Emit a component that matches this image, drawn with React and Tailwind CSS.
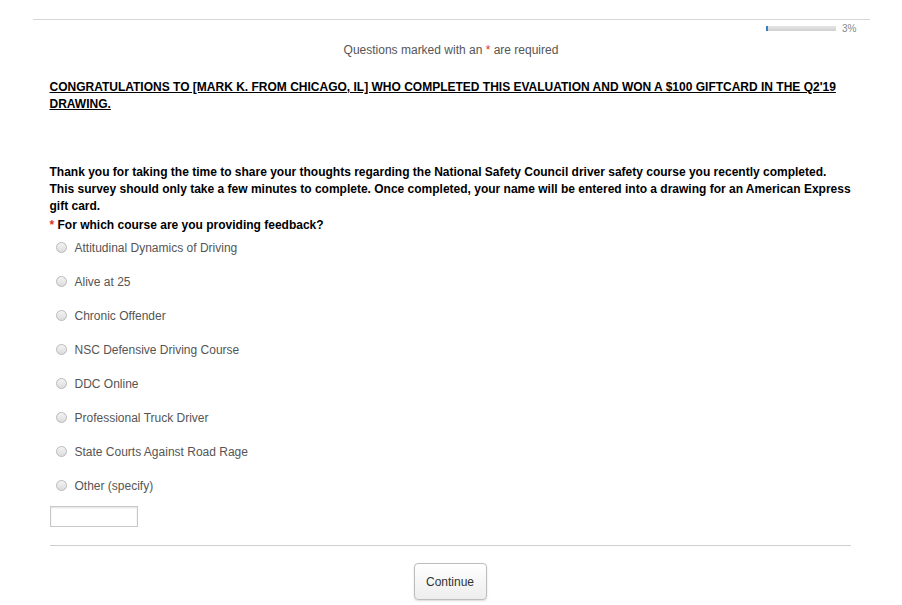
import { useState } from "react";

const courses = [
  "Attitudinal Dynamics of Driving",
  "Alive at 25",
  "Chronic Offender",
  "NSC Defensive Driving Course",
  "DDC Online",
  "Professional Truck Driver",
  "State Courts Against Road Rage",
  "Other (specify)",
];

const App = () => {
  const [picked, setPicked] = useState(null);

  return (
    <div className="min-h-screen bg-white font-['Liberation_Sans',Arial,sans-serif] text-[12px]">
      <div className="w-[837px] mx-auto pt-[19px]">
        {/* Top rule + progress */}
        <div className="border-t border-[#d6d6d6]" />
        <div className="flex justify-end items-center h-[16px] pr-[13px]">
          <div className="w-[70px] h-[5px] bg-gradient-to-b from-[#e6e6e6] to-[#cfcfcf] border-l-2 border-[#3a7fc1]" />
          <span className="ml-[6px] mt-[1px] text-[10px] text-[#888]">3%</span>
        </div>

        <p className="mt-[6px] text-center leading-[17px] text-[#555]">
          Questions marked with an <span className="text-[#e0321e]">*</span> are required
        </p>

        <div className="pl-[17px] pr-[17px]">
          <p className="mt-[20px] leading-[17px] font-bold underline text-black">
            CONGRATULATIONS TO [MARK K. FROM CHICAGO, IL] WHO COMPLETED THIS EVALUATION AND WON A $100 GIFTCARD IN THE Q2'19 DRAWING.
          </p>

          <p className="mt-[51px] leading-[17px] font-bold text-black">
            Thank you for taking the time to share your thoughts regarding the National Safety Council driver safety course you recently completed. This survey should only take a few minutes to complete. Once completed, your name will be entered into a drawing for an American Express gift card.
          </p>

          <p className="mt-[2px] leading-[17px] font-bold text-black">
            <span className="text-[#e0321e]">* </span>For which course are you providing feedback?
          </p>

          {/* Options */}
          <div className="mt-[5px] flex flex-col gap-[17px]">
            {courses.map((c, i) => (
              <label
                key={c}
                className="flex items-center h-[17px] cursor-pointer"
                onClick={() => setPicked(i)}
              >
                <span className="ml-[6px] w-[11px] h-[11px] rounded-full border border-[#b9b9b9] bg-gradient-to-b from-[#f4f4f4] to-[#dcdcdc] flex items-center justify-center">
                  {picked === i && <span className="w-[5px] h-[5px] rounded-full bg-[#555]" />}
                </span>
                <span className="ml-[8px] text-[#555]">{c}</span>
              </label>
            ))}
          </div>

          <input
            type="text"
            className="mt-[12px] block w-[88px] h-[21px] border border-[#c8c8c8] shadow-[inset_0_1px_2px_rgba(0,0,0,0.12)] outline-none px-1"
          />

          <div className="mt-[18px] mr-[2px] border-t border-[#cfcfcf]" />

          <div className="flex justify-center mt-[17px] mr-[2px]">
            <button className="w-[73px] h-[37px] rounded-[4px] border border-[#bdbdbd] bg-gradient-to-b from-white to-[#ededed] shadow-[0_1px_2px_rgba(0,0,0,0.15)] text-[12px] text-[#333]">
              Continue
            </button>
          </div>
        </div>
      </div>
    </div>
  );
};

export default App;
